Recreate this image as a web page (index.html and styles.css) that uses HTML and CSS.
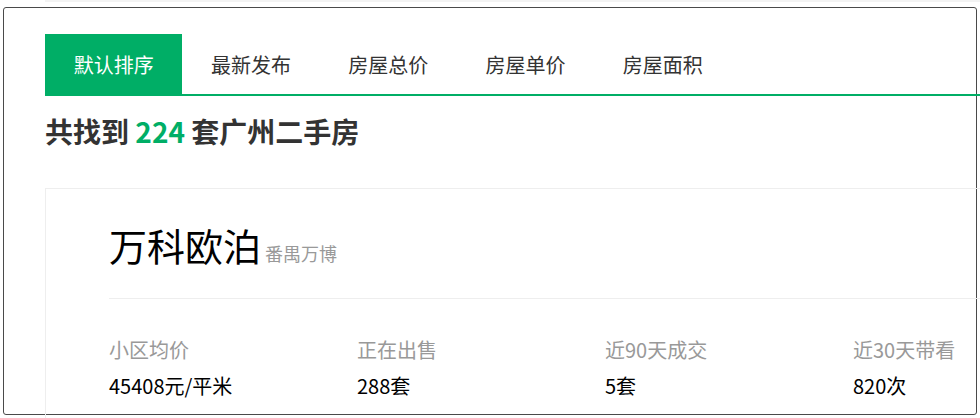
FILE: index.html
```html
<!DOCTYPE html>
<html lang="zh-CN">
<head>
<meta charset="utf-8">
<title>广州二手房</title>
<link rel="stylesheet" href="styles.css">
</head>
<body>
<div class="prev-strip"></div>
<div class="panel">
  <ul class="tabs">
    <li class="tab active">默认排序</li>
    <li class="tab">最新发布</li>
    <li class="tab">房屋总价</li>
    <li class="tab">房屋单价</li>
    <li class="tab">房屋面积</li>
  </ul>
  <h2 class="total">共找到 <span class="num">224</span> 套广州二手房</h2>
  <div class="card">
    <div class="card-title">
      <span class="name">万科欧泊</span><span class="area">番禺万博</span>
    </div>
    <div class="stats">
      <div class="stat"><div class="label">小区均价</div><div class="value">45408元/平米</div></div>
      <div class="stat"><div class="label">正在出售</div><div class="value">288套</div></div>
      <div class="stat"><div class="label">近90天成交</div><div class="value">5套</div></div>
      <div class="stat"><div class="label">近30天带看</div><div class="value">820次</div></div>
    </div>
  </div>
</div>
</body>
</html>
```

FILE: styles.css
```css
html, body {
  margin: 0;
  padding: 0;
  overflow: hidden;
  background: #fff;
}
body {
  font-family: "Noto Sans CJK SC", "Noto Sans", sans-serif;
  width: 980px;
  height: 418px;
}
.prev-strip {
  margin-left: 45px;
  height: 2px;
  background: #f3f3f3;
}
.panel {
  margin: 5px 0 0 3px;
  border: 1px solid #4a4a4a;
  border-radius: 3px;
  padding: 26px 0 0 41px;
  box-sizing: border-box;
  width: 974px;
  height: 408px;
}
.tabs {
  list-style: none;
  margin: 0;
  padding: 0;
  display: flex;
  width: 1000px;
  border-bottom: 2px solid #00ae66;
}
.tab {
  width: 137.3px;
  height: 60px;
  line-height: 60px;
  padding-top: 1px;
  box-sizing: border-box;
  text-align: center;
  font-size: 20px;
  color: #333;
}
.tab.active {
  background: #00ae66;
  color: #fff;
}
.total {
  margin: 21px 0 0;
  font-size: 28px;
  line-height: 28px;
  font-weight: bold;
  color: #333;
}
.total .num {
  color: #00ae66;
}
.card {
  margin-top: 43px;
  width: 1000px;
  height: 260px;
  border: 1px solid #eee;
  padding: 37px 0 0 63px;
  box-sizing: border-box;
}
.card-title {
  padding-bottom: 25px;
  border-bottom: 1px solid #eee;
  line-height: 38px;
}
.name {
  font-size: 38px;
  color: #000;
}
.area {
  margin-left: 4px;
  font-size: 18px;
  color: #999;
}
.stats {
  display: grid;
  grid-template-columns: repeat(4, 248px);
  padding-top: 41px;
}
.label {
  font-size: 20px;
  line-height: 20px;
  color: #999;
}
.value {
  margin-top: 16px;
  font-size: 20px;
  line-height: 20px;
  color: #000;
}
```
